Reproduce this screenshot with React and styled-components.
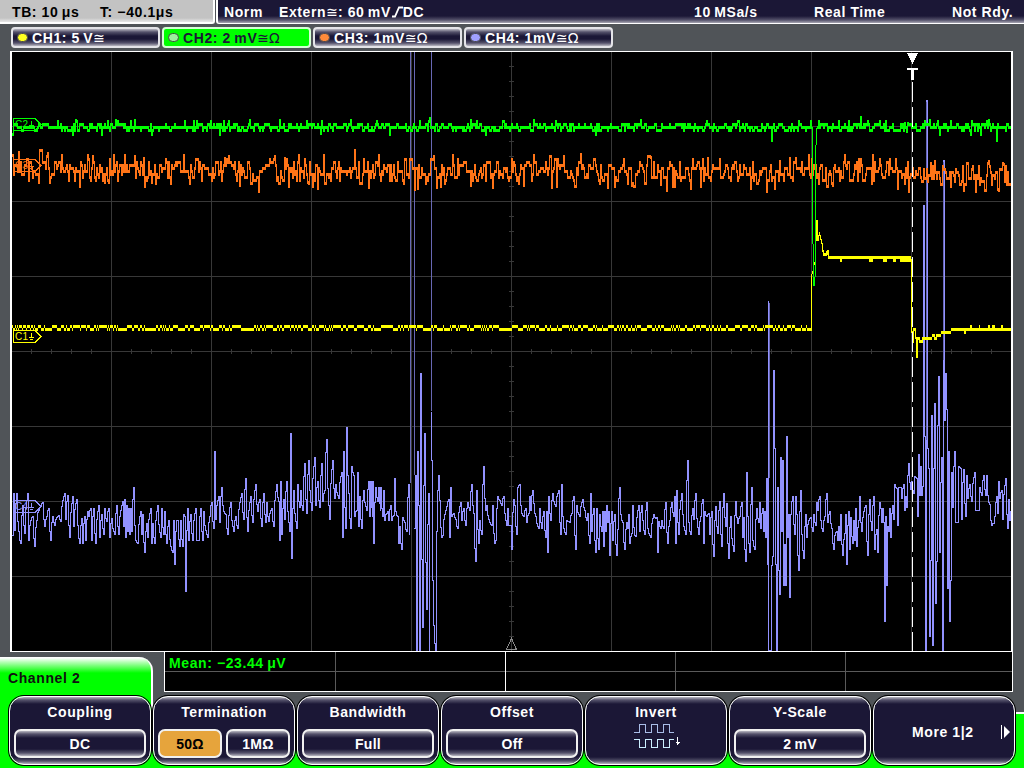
import styled, { createGlobalStyle, css } from 'styled-components';

const GREEN = '#00ff00';
const NAVY = '#1b1736';
const GRAY = '#505458';

const BLOCK_A = [37,345,41,220,46,330,51,220,57,335,63,370,68,255,75,340,80,240,84,220,88,360,94,300,100,290,105,380,110,300,118,270,124,260,129,248,134,318,140,290,147,265,153,360,158,290,165,315,178,285,184,305,195,220,199,298,205,225,210,352,219,230,222,320,231,238,235,315,240,370,246,295,250,370,254,290,258,362,263,275,268,290,273,265,276,360,282,265,288,370,297,255,300,352,306,283,312,343,316,265,321,305,327,265,331,352,337,295,345,343,351,257,357,343,369,245,372,318,375,238,378,352,381,255,384,335,388,265,390,343,394,265,397,335,402,202,408,360,414,370,423,275,426,343,430,283,435,397,441,310,445,352,453,265,456,370,460,310,465,370,474,257,483,352,487,265,491,343,495,275,501,370,508,300,513,380,519,397,522,300,525,433,530,300,535,300,540,380,544,300,549,380,553,283,556,290,558,515,564,265,567,360,573,283,579,360,588,265,591,360,597,360,603,265,609,360,612,275,624,352,630,290,633,255,637,248,642,325,645,94,648,298,657,230,661,307,666,202,672,275,678,283,684,343,694,248,702,335,708,290,714,325,726,220,732,298,738,175,744,335,753,230,759,307,768,193,774,275,780,238,786,318,792,220,797,307,801,248,808,305,815,265,822,318,830,193,836,245,840,360,843,184,846,343,852,238,856,298,861,184,869,333,873,40,876,415,882,210,891,325,895,193,900,263,904,210,909,272,915,130,921,280,927,120,936,272,945,112,949,255,954,184,960,263,966,130,970,245,975,210,981,58,990,298,999,120,1005,235,1009,193,1017,235,1026,157,1029,352,1032,94,1038,325,1041,22,1046,220,1053,325,1056,140,1062,165,1065,290,1070,270,1074,157,1078,318,1081,230,1086,325,1091,210,1100,270,1106,184,1110,290,1114,184,1118,290,1120,184,1122,370,1128,202,1133,245,1137,202,1143,270];
const BLOCK_B = [3,382,8,470,12,390,16,480,25,455,28,480,33,436,37,480,42,465,45,354,48,455,54,470,57,550,61,500,67,568,70,472,75,487,82,515,87,373,91,523];
const BLOCK_C = [105,505,109,346,111,870,114,274,117,435,120,870,123,40,129,803,135,220,141,749,147,400,149,870];
const BLOCK_D = [157,157,157,300,161,795,167,870,169,870,170,515,177,346,181,420,187,533,190,525,200,440,207,418,210,532,213,382,217,470,222,460,229,478,234,506,243,427,247,480,252,444,258,497,264,427,270,450,276,373,281,460,288,604,291,391,297,550,300,480,306,523,312,319,318,450,322,436,330,487,336,497,339,436,345,550,349,540,354,409,360,420,366,435,372,409,380,495,384,444,388,495,393,497,396,569,402,418,406,435,411,523,414,382,420,373,425,460,432,470,438,444,441,487,447,460,450,409,453,450,459,391,463,430,468,470,477,505,480,445,486,505,492,455,498,532,501,455,504,577,507,409,512,480,519,400,528,440,537,391,543,523,546,373,551,505,558,523,560,480,570,487,576,460,582,409,588,568,592,436,600,470,610,418,615,450,621,480,624,460,630,550,633,400,637,515,642,445,648,577,652,445,657,568,660,462,666,515,669,454,672,560,675,454,678,515,681,436,684,487,687,454,690,586,696,454,700,540,704,463,711,586,714,507,720,382,724,463,729,487,735,568,741,487,744,505,747,462,750,550,756,520,759,436,765,525,768,530,777,436,780,515,787,436,790,480,795,523,801,427,804,505,813,532,821,463,828,475,831,472,834,577,837,485,842,505,846,480,853,505,858,427,864,550,870,480,877,427,881,470,885,409,888,550,891,391,897,523,905,400,909,463,918,523,924,301,927,487,933,523,939,445,942,478,948,400,956,523,963,470,969,418,972,550,975,455,980,470,986,460,989,523,996,455,1003,590,1008,440,1014,520,1020,425,1025,560,1031,400,1038,500,1042,430,1048,595,1054,470,1061,575,1067,425,1074,490,1080,470];
const BLOCK_E = [0,470,6,427,9,532,12,473,18,604,21,337,25,470,31,578,36,382,40,540,45,568,51,445,57,487,60,427,64,505,69,445,72,515,75,455,78,532,81,355,84,613,87,-177,88,870,95,870,96,615,99,588,102,31,106,265,107,613,111,870,114,382,117,632,120,704,123,292,127,515,129,301,133,677,136,553,138,677,141,229,145,532,148,463,150,713,154,463,159,409,165,523,168,409,172,463,177,632,183,391,188,570,193,596,198,463,201,532,206,480,213,472,219,515,222,463,228,497,231,427,235,450,240,409,244,480,249,515,254,470,261,400,265,487,270,454,275,505,282,569,286,525,291,515,294,541,297,499,300,541,304,463,309,586,315,520,318,463,321,613,327,454,330,569,333,472,339,550,342,480,345,541,348,445,351,560,356,480,360,409,366,515,372,455,378,436,384,586,390,418,396,510,402,409,405,569,410,507,414,577,419,427,423,445,426,487,429,445,432,487,435,785,437,470,440,677,444,500,447,515,450,445,453,532,459,436,463,478,466,373,471,385,474,497,477,382,483,382,487,415,492,373,495,451,498,409,501,442,507,310,513,388,517,363,521,400,524,350,530,355,534,469,537,283,540,406,543,319,547,406,550,380,552,-465,555,228,557,870,561,-780,564,265,568,325,570,830,574,600,576,166,579,857,585,130,588,731,592,605,597,49,600,577,606,292,608,870,612,-600,615,181,618,40,621,148,624,686,627,274,630,785,634,660,636,337,639,442,645,274,649,487,655,487,658,319,663,325,666,478,672,328,678,469,681,346,684,415,690,373,697,424,705,337,709,451,717,451,720,382,727,405,732,346,737,405,741,346,745,405,751,434,757,497,761,490,766,470,771,410,774,460,777,364,781,415,786,391,789,478,798,355,804,505,807,418,810,480,813,455];

const makeRandom = (seed) => {
  let s = seed;
  return () => {
    s = (s * 16807) % 2147483647;
    return s / 2147483647;
  };
};

// One vertical bar per pixel column, reaching from the previous sample to this one
const barPath = (samples, pad) => {
  let d = '';
  let last = null;
  samples.forEach(({ x, levels }) => {
    const all = last === null ? levels : [last, ...levels];
    d += `M${x + 0.5} ${Math.min(...all) - pad}V${Math.max(...all) + pad}`;
    last = levels[levels.length - 1];
  });
  return d;
};

const resample = (block, dx, dy) => {
  const points = [];
  for (let i = 0; i < block.length; i += 2) {
    points.push([
      Math.max(12, Math.floor(dx + block[i] / 3 - 0.6)),
      dy + block[i + 1] / 3,
    ]);
  }
  const samples = [];
  points.forEach(([x, y], i) => {
    const prev = points[i - 1];
    if (prev && prev[0] >= x) {
      samples[samples.length - 1].levels.push(y);
      return;
    }
    if (prev) {
      for (let k = prev[0] + 1; k < x; k += 1) {
        const t = ((k - prev[0]) / (x - prev[0])) ** 0.45;
        samples.push({ x: k, levels: [prev[1] + (y - prev[1]) * t] });
      }
    }
    samples.push({ x, levels: [y] });
  });
  return samples;
};

const sweep = (from, to, level) => {
  const samples = [];
  for (let x = from; x < to; x += 1) samples.push({ x, levels: [level(x)] });
  return samples;
};

const ch4Path =
  barPath([...resample(BLOCK_A, 0, 420), ...resample(BLOCK_B, 380, 360)], 0.5) +
  barPath(resample(BLOCK_C, 380, 360), 0.5) +
  barPath([...resample(BLOCK_D, 380, 360), ...resample(BLOCK_E, 740, 360)], 0.5);

const CH3_PEAKS = {
  12: 155, 13: 174, 18: 152, 28: 180, 38: 182, 39: 150, 40: 150, 41: 150, 49: 182, 61: 155, 79: 186, 87: 155,
  92: 156, 104: 182, 108: 182, 113: 155, 124: 155, 143: 158, 151: 182, 170: 183, 183: 155, 189: 183, 224: 158,
  239: 185, 258: 191, 269: 159, 284: 158, 288: 186, 298: 155, 307: 182, 317: 188, 323: 155, 354: 150, 368: 187,
  378: 155, 414: 189, 417: 188, 436: 187, 452: 155, 470: 185, 492: 187, 523: 185, 533: 155, 551: 187, 556: 186,
  580: 154, 599: 183, 607: 187, 631: 185, 650: 157, 660: 184, 666: 190, 672: 186, 690: 188, 700: 186, 707: 158,
  750: 188, 766: 191, 774: 188, 779: 161, 789: 158, 795: 158, 808: 155, 832: 185, 844: 155, 872: 155, 897: 188,
  908: 191, 934: 161, 950: 186, 963: 190, 975: 191, 988: 161, 997: 189, 1003: 164,
};
const CH2_PEAKS = {
  12: 134, 72: 134, 75: 120, 101: 134, 115: 120, 134: 120, 151: 134, 219: 134, 249: 120, 279: 120, 320: 133,
  350: 120, 389: 134, 429: 118, 470: 120, 485: 134, 533: 120, 595: 134, 640: 120, 771: 140, 860: 117, 904: 123,
  906: 131, 907: 123, 929: 120, 939: 134, 970: 134, 980: 134, 988: 120, 996: 140,
};

const rand3 = makeRandom(4711);
let walk3 = 0;
const ch3Path = barPath(
  sweep(12, 1011, (x) => {
    const drift = x > 920 ? 4 : x < 60 ? -3 : 0;
    const kick = rand3() + rand3() - 1;
    // the signal rests for a column now and then
    if (rand3() < 0.78) walk3 = walk3 * 0.2 + kick * 16;
    return CH3_PEAKS[x] ?? 171 + drift + Math.round(walk3 / 3) * 3;
  }),
  1.5
);

const rand2 = makeRandom(90210);
let hold2 = 127.5;
const ch2Level = (x) => {
  const r = rand2();
  if (r < 0.18) hold2 = 124.5;
  else if (r < 0.56) hold2 = 127.5;
  else if (r < 0.7) hold2 = 130.5;
  return CH2_PEAKS[x] ?? (r > 0.97 ? 121.5 : hold2);
};
const ch2Path =
  barPath(sweep(12, 812, ch2Level), 1.5) +
  barPath(sweep(817, 1011, ch2Level), 1.5) +
  'M812.5 127V244M813.5 244V286M814.5 277V286M815.5 145V277M816.5 128V145';

const rand1 = makeRandom(2024);
let hold1 = 329.5;
const ch1Bits = [];
for (let x = 12; x < 811; x += 1) {
  if (rand1() < 0.34) hold1 = hold1 === 329.5 ? 326.5 : 329.5;
  ch1Bits.push([x, x > 244 && x < 254 ? 329.5 : hold1]);
}
const ch1Tail = [
  [829, 82, 257.5],
  [840, 2, 260.5],
  [869, 4, 260.5],
  [883, 4, 260.5],
  [893, 3, 260.5],
  [900, 11, 260.5],
  [917, 3, 338.5],
  [919, 4, 341.5],
  [922, 10, 338.5],
  [932, 3, 335.5],
  [934, 3, 338.5],
  [936, 5, 335.5],
  [941, 10, 332.5],
  [951, 60, 329.5],
  [964, 2, 332.5],
  [970, 2, 326.5],
  [979, 1, 326.5],
  [988, 2, 326.5],
  [992, 3, 326.5],
  [1001, 2, 326.5],
];

const MARKERS = [
  { label: 'C2', y: 118, color: GREEN },
  { label: 'C3', y: 159, color: '#ff7417' },
  { label: 'C4', y: 500, color: '#9292ff' },
  { label: 'C1', y: 330, color: '#ffff00' },
];

const range = (n) => Array.from({ length: n }, (_, i) => i);

function Graticule() {
  return (
    <g stroke="#383838" strokeWidth="1">
      {range(9).map((i) => (
        <path key={i} d={`M${111.5 + i * 100} 52V651`} />
      ))}
      {range(7).map((i) => (
        <path key={i} d={`M12 ${126.5 + i * 75}H1011`} />
      ))}
      {range(49).map((i) => (
        <path key={i} d={`M${31.5 + i * 20} 349V354`} />
      ))}
      {range(39).map((i) => (
        <path key={i} d={`M509 ${66.5 + i * 15}H514`} />
      ))}
    </g>
  );
}

function Marker({ label, y, color }) {
  return (
    <g stroke={color} fill="none">
      <path d={`M13.5 ${y + 0.5}H35L41 ${y + 6.5}L35 ${y + 12.5}H13.5Z`} />
      <MarkerLabel x="15" y={y + 10} fill={color} textLength="13">
        {label}
      </MarkerLabel>
      <path d={`M31.5 ${y + 2.5}V${y + 7}M28.5 ${y + 7.5}H34M30 ${y + 9.5}H33`} />
    </g>
  );
}

function Waveforms() {
  return (
    <Plot viewBox="12 52 999 599">
      <Graticule />
      <path d={ch4Path} stroke="#9292ff" />
      <path
        d="M410.5 52V483M414.5 52V475M431.5 52V411M769.5 303V478M926.5 102V440M943.5 162V360"
        stroke="#6868b4"
      />
      <path d={ch3Path} stroke="#ff7417" />
      <g fill="#ffff00">
        {ch1Bits.map(([x, y]) => (
          <rect key={x} x={x} y={y - 1.5} width="1" height="3" />
        ))}
        {ch1Tail.map(([x, w, y]) => (
          <rect key={`${x}-${y}`} x={x} y={y - 1.5} width={w} height="3" />
        ))}
      </g>
      <path
        d="M811.5 331V274M812.5 274V271M814.5 262V265M816.5 220V241M817.5 220V241M818.5 235V241M819.5 232V236M820.5 235V240M821.5 239V244M822.5 243V252M823.5 250V256M824.5 253V256M825.5 253V256M826.5 251V256M827.5 250V255M828.5 250V259"
        stroke="#ffff00"
      />
      <path
        d="M911.5 259V333M912.5 331V334M913.5 328V343M914.5 328V331M915.5 328V339M916.5 337V358M917.5 337V358"
        stroke="#ffff00"
      />
      <path d={ch2Path} stroke={GREEN} />
      {MARKERS.map((m) => (
        <Marker key={m.label} {...m} />
      ))}
      <path d="M907 53H918L912.5 64Z" fill="#fff" />
      <path d="M907 68H918V70H914V80H911V70H907Z" fill="#fff" />
      <path d="M912.5 81.7V651" stroke="#fff" strokeDasharray="20 5" />
      <path d="M506.5 649.5L511.5 638.5L516.5 649.5Z" stroke="#8a8a8a" />
    </Plot>
  );
}

const SOFTKEYS = [
  { title: 'Coupling', options: ['DC'] },
  { title: 'Termination', options: ['50Ω', '1MΩ'], active: '50Ω' },
  { title: 'Bandwidth', options: ['Full'] },
  { title: 'Offset', options: ['Off'] },
  { title: 'Invert', icon: true },
  { title: 'Y-Scale', options: ['2\u2009mV'] },
];

const CHANNELS = [
  { name: 'CH1: 5\u2009V', color: '#ffff20', unit: '≅' },
  { name: 'CH2: 2\u2009mV', color: '#9df09d', unit: '≅Ω', selected: true },
  { name: 'CH3: 1mV', color: '#ff8a3a', unit: '≅Ω' },
  { name: 'CH4: 1mV', color: '#a0a0ff', unit: '≅Ω' },
];

function App() {
  return (
    <Screen>
      <GlobalStyle />
      <StatusBar>
        <TimeBase>
          <Status $w={88}>TB: 10{'\u2009'}μs</Status>
          <Status>T: −40.1μs</Status>
        </TimeBase>
        <Trigger>
          <Status $w={55}>Norm</Status>
          <Status $w={415}>
            Extern<Thin>≅</Thin>: 60{'\u2009'}mV
            <Edge viewBox="0 0 11 12">
              <path d="M0 10.5H3L7 1.5H11" fill="none" stroke="#fff" strokeWidth="1.8" />
            </Edge>
            DC
          </Status>
          <Status $w={120}>10{'\u2009'}MSa/s</Status>
          <Status $w={138}>Real Time</Status>
          <Status>Not Rdy.</Status>
        </Trigger>
      </StatusBar>
      <ChannelRow>
        {CHANNELS.map((c) => (
          <ChannelTab key={c.name} $selected={c.selected}>
            <Led $color={c.color} $selected={c.selected} />
            {c.name}
            <Thin>{c.unit}</Thin>
          </ChannelTab>
        ))}
      </ChannelRow>
      <Scope>
        <Waveforms />
      </Scope>
      <Footer>
        <Upper>
          <MenuTab>Channel 2</MenuTab>
          <Measurements>
            {range(5).map((i) => (
              <Measure key={i} $first={i === 0} $strong={i === 1}>
                <MeasureLine>{i === 0 && 'Mean: −23.44\u2009μV'}</MeasureLine>
              </Measure>
            ))}
          </Measurements>
        </Upper>
        <Softkeys>
          {SOFTKEYS.map((k) => (
            <Softkey key={k.title}>
              <Title>{k.title}</Title>
              {k.icon && (
                <Wave viewBox="0 0 48 26">
                  <path d="M0 9.5H5.5V1.5H11.5V9.5H17.5V1.5H23.5V9.5H29.5V1.5H35.5V9.5H40" stroke="#a9bde8" />
                  <path d="M0 16.5H5.5V24.5H11.5V16.5H17.5V24.5H23.5V16.5H29.5V24.5H35.5V16.5H40" stroke="#ccefff" />
                  <path d="M43.5 14V22M41.5 19.5H46M42.5 20.5H45" stroke="#fff" />
                </Wave>
              )}
              {k.options && (
                <Options>
                  {k.options.map((o) => (
                    <Option key={o} $active={k.active === o}>
                      {o}
                    </Option>
                  ))}
                </Options>
              )}
            </Softkey>
          ))}
          <Softkey $more>
            More 1|2
            <Arrow viewBox="0 0 9 16">
              <path d="M0.5 1V15" stroke="#fff" />
              <path d="M3 2L9 8L3 14Z" fill="#fff" />
            </Arrow>
          </Softkey>
        </Softkeys>
      </Footer>
    </Screen>
  );
}

const GlobalStyle = createGlobalStyle`
  body {
    margin: 0;
    overflow: hidden;
  }
  * {
    box-sizing: border-box;
  }
`;

const glass = css`
  background: linear-gradient(
    #b9b8c2 0,
    #55526b 3px,
    ${NAVY} 7px,
    ${NAVY} calc(100% - 7px),
    #55526b calc(100% - 3px),
    #b9b8c2 100%
  );
`;

const Screen = styled.div`
  display: flex;
  flex-direction: column;
  width: 1024px;
  height: 768px;
  overflow: hidden;
  background-color: ${GRAY};
  color: white;
  font-family: 'Liberation Sans', Arial, sans-serif;
  font-size: 14px;
  font-weight: bold;
  letter-spacing: 0.6px;
  white-space: pre;
`;

const StatusBar = styled.div`
  display: flex;
  gap: 1px;
  height: 24px;
`;

const TimeBase = styled.div`
  display: flex;
  width: 215px;
  padding-left: 12px;
  color: black;
  background: linear-gradient(#c3c3c3 18px, #e8e8e8 22px);
  border-right: 2px solid white;
  border-bottom: 2px solid white;
  border-bottom-right-radius: 3px;
`;

const Trigger = styled.div`
  display: flex;
  flex: 1;
  padding-left: 6px;
  background: linear-gradient(${NAVY} 16px, #55526b 20px, #a9a8b4 23px);
  border-left: 2px solid white;
  border-bottom: 1px solid white;
  border-bottom-left-radius: 3px;
`;

const Status = styled.span`
  display: block;
  width: ${(props) => (props.$w ? `${props.$w}px` : 'auto')};
  flex-shrink: 0;
  line-height: 24px;
`;

const Thin = styled.span`
  font-family: 'DejaVu Sans', sans-serif;
  font-size: 14px;
  font-weight: normal;
  letter-spacing: 0;
  line-height: 1;
`;

const Edge = styled.svg`
  width: 11px;
  height: 12px;
  margin-left: 1px;
  vertical-align: -1px;
`;

const ChannelRow = styled.div`
  display: flex;
  gap: 2px;
  height: 27px;
  padding: 3px 0 0 11px;
`;

const ChannelTab = styled.div`
  display: flex;
  align-items: center;
  width: 149px;
  height: 21px;
  padding-left: 4px;
  border: 2px solid ${(props) => (props.$selected ? '#d5ffd5' : '#e4e4e8')};
  border-radius: 4px;
  ${glass}
  ${(props) =>
    props.$selected &&
    css`
      color: #1b1736;
      background: ${GREEN};
    `}
`;

const Led = styled.span`
  width: 11px;
  height: 9px;
  margin-right: 4px;
  border: 1px solid ${(props) => (props.$selected ? '#3d4f3d' : '#4a4a50')};
  border-radius: 5px;
  background-color: ${(props) => props.$color};
`;

const Scope = styled.div`
  width: 1003px;
  height: 601px;
  margin-left: 10px;
  border: solid white;
  border-width: 1px 2px;
  background-color: black;
`;

const Plot = styled.svg`
  display: block;
  width: 999px;
  height: 599px;
  fill: none;
  shape-rendering: crispEdges;
`;

const MarkerLabel = styled.text`
  stroke: none;
  font-size: 10px;
  font-weight: normal;
  letter-spacing: 0;
`;

const Footer = styled.div`
  height: 116px;
  background: linear-gradient(transparent 60px, white 60px, white 62px, ${GREEN} 62px);
`;

const Upper = styled.div`
  display: flex;
  height: 44px;
`;

const MenuTab = styled.div`
  width: 153px;
  height: 57px;
  margin: 5px 11px 0 0;
  padding: 12px 8px;
  flex-shrink: 0;
  color: #101010;
  line-height: 18px;
  background: linear-gradient(white 1px, #b8ffb8 5px, ${GREEN} 16px);
  border-right: 2px solid white;
  border-top-right-radius: 14px;
`;

const Measurements = styled.div`
  display: flex;
  width: 849px;
  height: 40px;
  background-color: black;
  border: solid white;
  border-width: 0 1px 1px;
`;

const Measure = styled.div`
  width: ${(props) => (props.$first ? 171 : 170)}px;
  flex-shrink: 0;
  border-right: 1px solid ${(props) => (props.$strong ? 'white' : '#5a5a5a')};

  &:last-child {
    flex-shrink: 1;
    border-right: 0;
  }
`;

const MeasureLine = styled.div`
  height: 20px;
  padding-left: 4px;
  border-bottom: 1px solid #5a5a5a;
  color: ${GREEN};
  line-height: 22px;
`;

const Softkeys = styled.div`
  position: relative;
  display: flex;
  height: 70px;
  padding-left: 9px;
  gap: 2px;
`;

const Softkey = styled.div`
  display: flex;
  flex-direction: column;
  align-items: center;
  width: 142px;
  height: 69px;
  padding: 6px 4px 0;
  border: 1px solid white;
  border-radius: 15px;
  box-shadow: 0 0 0 1px black;
  ${glass}
  ${(props) =>
    props.$more &&
    css`
      flex-direction: row;
      padding: 2px 4px 0 38px;
      justify-content: space-between;
    `}
`;

const Title = styled.div`
  line-height: 18px;
`;

const Options = styled.div`
  display: flex;
  gap: 4px;
  width: 100%;
  margin-top: 8px;
`;

const Option = styled.div`
  flex: 1;
  height: 29px;
  border: 2px solid #f0f0f0;
  border-radius: 7px;
  text-align: center;
  line-height: 27px;
  letter-spacing: 0.3px;
  ${glass}
  ${(props) =>
    props.$active &&
    css`
      color: black;
      background: #e6a43c;
    `}
`;

const Wave = styled.svg`
  width: 48px;
  height: 26px;
  margin: 2px 0 0 4px;
  fill: none;
  shape-rendering: crispEdges;
`;

const Arrow = styled.svg`
  width: 9px;
  height: 16px;
`;

export default App;
